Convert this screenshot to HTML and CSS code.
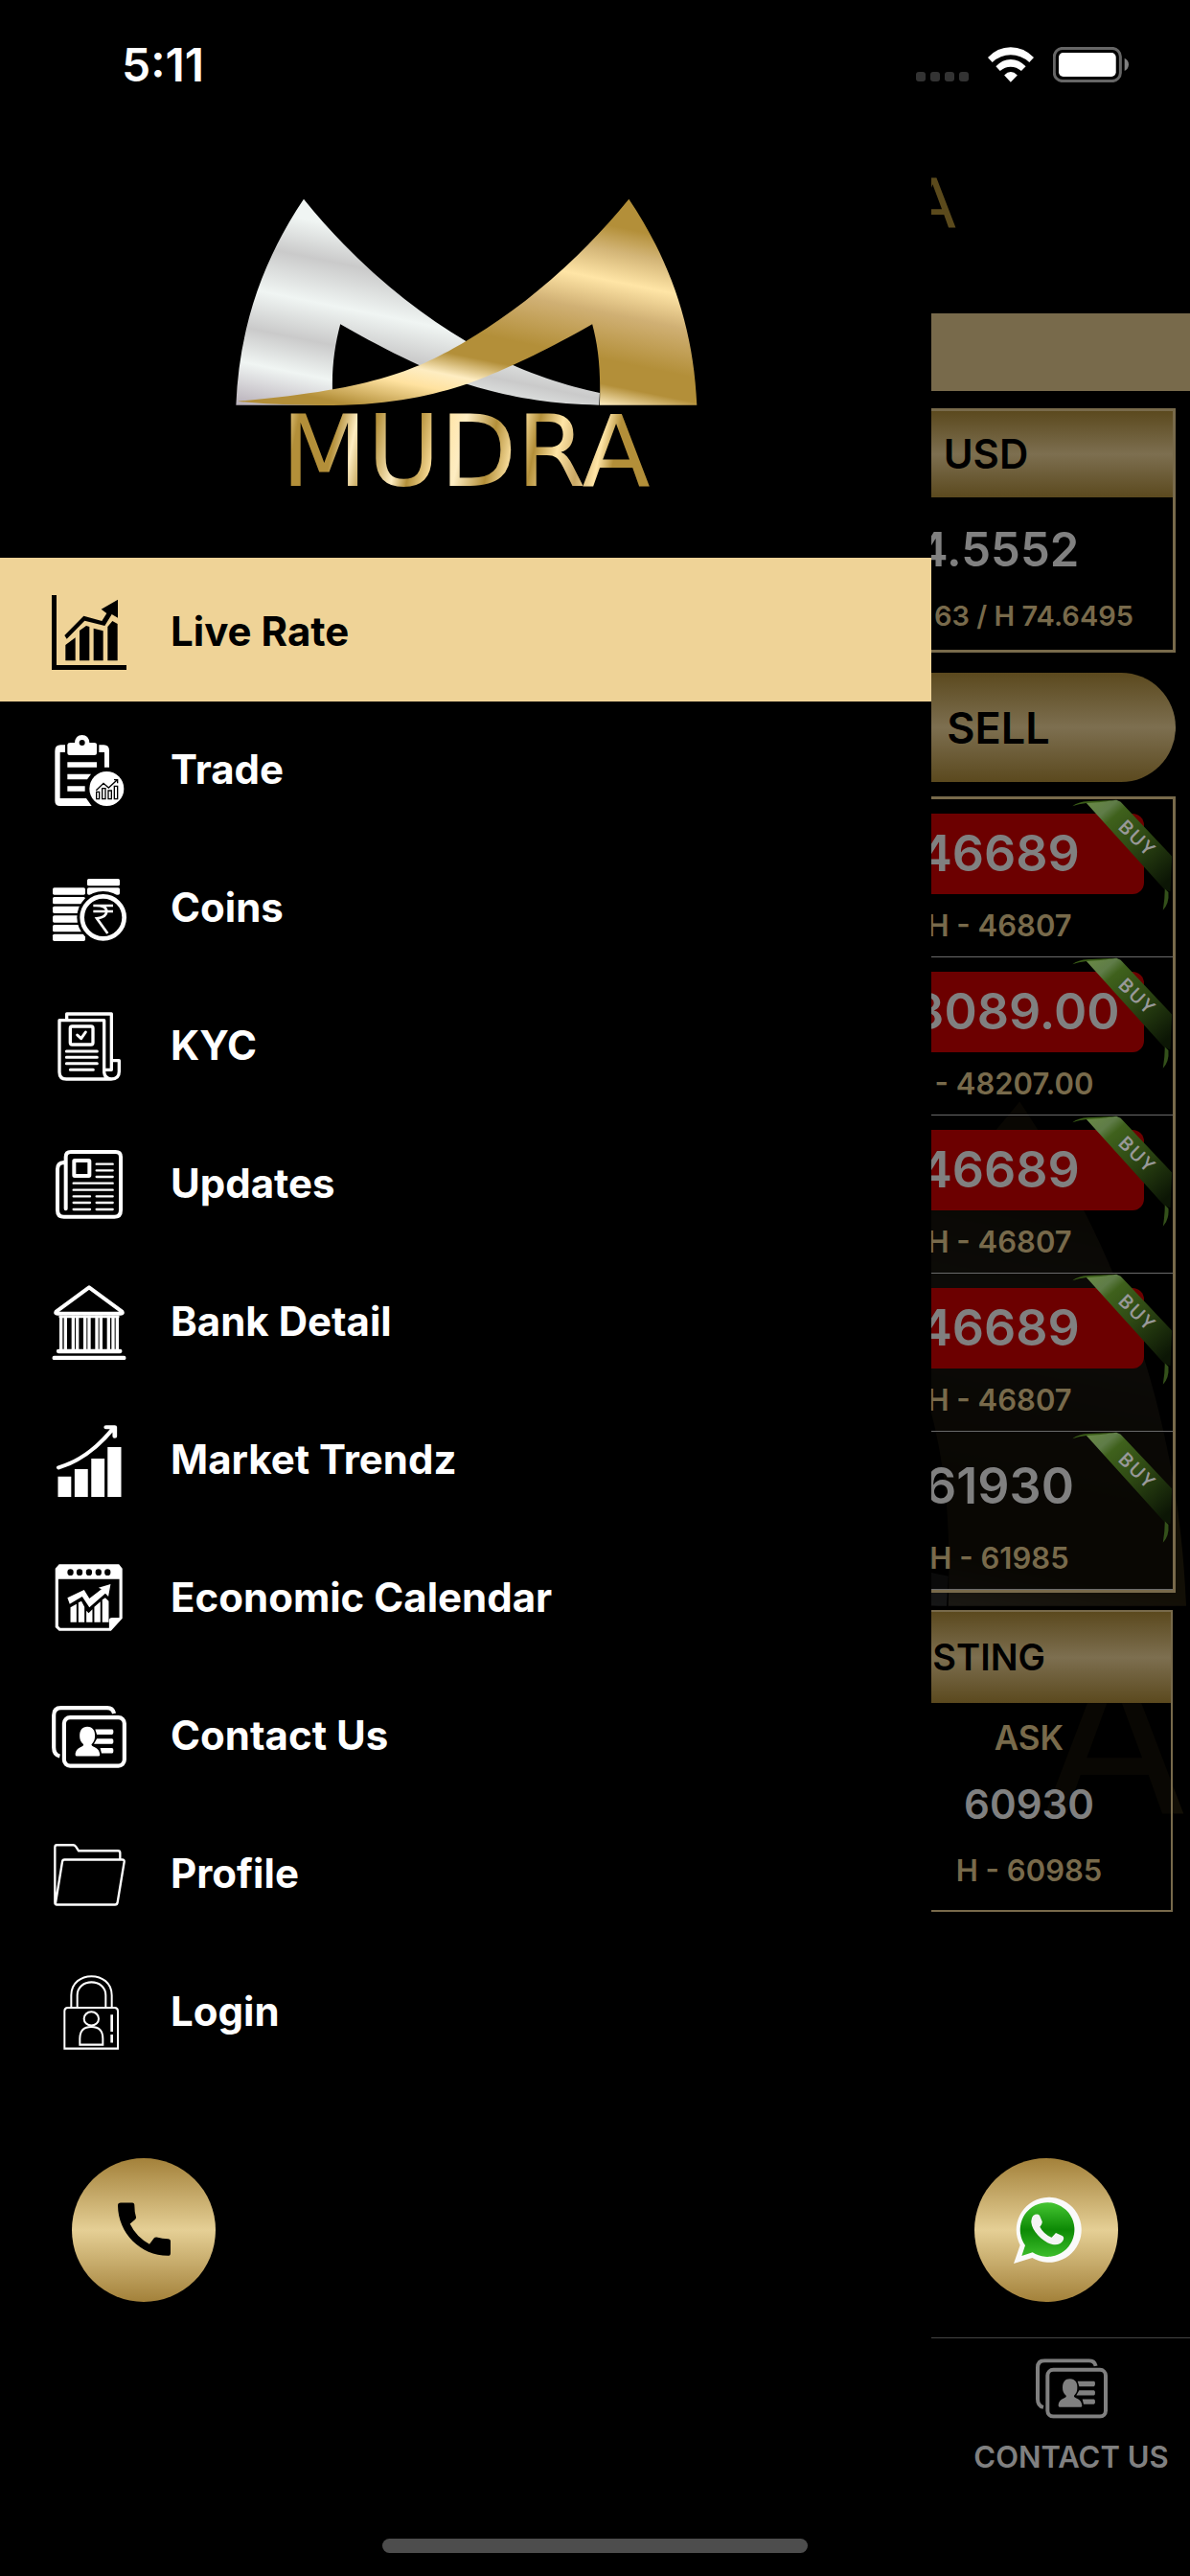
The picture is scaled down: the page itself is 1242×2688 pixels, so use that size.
FILE: index.html
```html
<!DOCTYPE html>
<html lang="en">
<head>
<meta charset="utf-8">
<meta name="viewport" content="width=device-width, initial-scale=1">
<title>Mudra</title>
<link rel="stylesheet" href="styles.css">
</head>
<body>
<svg class="defs" aria-hidden="true">
  <defs>
    <linearGradient id="gold" gradientUnits="userSpaceOnUse" x1="1288" y1="53" x2="1119" y2="881">
      <stop offset="0" stop-color="#b38f39"/><stop offset=".11" stop-color="#b38f39"/>
      <stop offset=".2" stop-color="#d3b577"/><stop offset=".31" stop-color="#ffe5a6"/>
      <stop offset=".43" stop-color="#d0b074"/><stop offset=".6" stop-color="#b38f39"/>
      <stop offset=".69" stop-color="#b38f39"/><stop offset=".77" stop-color="#feedc2"/>
      <stop offset=".83" stop-color="#ffe2a0"/><stop offset=".95" stop-color="#b38f39"/>
    </linearGradient>
    <linearGradient id="silver" gradientUnits="userSpaceOnUse" x1="284" y1="53" x2="149" y2="712">
      <stop offset="0" stop-color="#f0f5f3"/><stop offset=".09" stop-color="#f0f5f3"/>
      <stop offset=".26" stop-color="#cacaca"/><stop offset=".46" stop-color="#f0f5f3"/>
      <stop offset=".64" stop-color="#cacaca"/><stop offset=".8" stop-color="#f0f5f3"/>
      <stop offset="1" stop-color="#b8b0b9"/>
    </linearGradient>
    <linearGradient id="word" gradientUnits="userSpaceOnUse" x1="70" y1="250" x2="460" y2="330">
      <stop offset="0" stop-color="#ffe5a6"/><stop offset=".05" stop-color="#b38f39"/>
      <stop offset=".15" stop-color="#b38f39"/><stop offset=".2" stop-color="#feedc2"/>
      <stop offset=".25" stop-color="#b38f39"/><stop offset=".32" stop-color="#feedc2"/>
      <stop offset=".36" stop-color="#b38f39"/><stop offset=".42" stop-color="#ffe2a0"/>
      <stop offset=".48" stop-color="#feedc2"/><stop offset=".56" stop-color="#b38f39"/>
      <stop offset=".62" stop-color="#ffe5a6"/><stop offset=".67" stop-color="#b38f39"/>
      <stop offset=".73" stop-color="#ffe5a6"/><stop offset=".79" stop-color="#c9a765"/>
      <stop offset=".84" stop-color="#ffe5a6"/><stop offset=".88" stop-color="#b38f39"/>
      <stop offset="1" stop-color="#b38f39"/>
    </linearGradient>
    <linearGradient id="band" x1="0" y1="0" x2=".8" y2="1">
      <stop offset="0" stop-color="#6a8a44"/><stop offset=".18" stop-color="#5f7c48"/>
      <stop offset=".27" stop-color="#3f611c"/><stop offset=".55" stop-color="#2f4a14"/>
      <stop offset="1" stop-color="#0c1605"/>
    </linearGradient>
    <linearGradient id="chat" x1="0" y1="0" x2="0" y2="1">
      <stop offset="0" stop-color="#45c532"/><stop offset=".5" stop-color="#0d8a05"/><stop offset="1" stop-color="#3cbd2b"/>
    </linearGradient>
    <symbol id="mark" viewBox="0 0 530 240">
      <g transform="scale(.338 .3333)">
        <path fill="url(#silver)" d="M284 53C440 250 620 400 785 498C930 585 1080 635 1198 660L1196 698C1020 695 890 665 790 633C680 595 560 540 397 445C380 510 370 580 373 660V698H75C85 450 160 240 284 53Z"/>
        <path fill="url(#gold)" d="M1288 53C1130 250 950 400 785 498C640 585 500 650 80 686C180 697 280 699 373 699C560 697 690 665 785 633C890 595 1010 540 1175 445C1192 510 1202 580 1198 698H1498C1488 450 1412 240 1288 53Z"/>
      </g>
    </symbol>
    <symbol id="ribbon" viewBox="479 40 313 350">
      <path fill="#3a5c18" d="M479 62Q495 48 530 46L617 42L560 52L523 52Q498 54 479 62Z"/>
      <path fill="url(#band)" d="M523 52Q570 50 617 42L630 48L790 218L785 328L767 322Z"/>
      <path fill="#33501a" d="M768 320L779 330Q782 365 762 386Q768 350 768 320Z"/>
    </symbol>
    <symbol id="cards" viewBox="363 724 225 188">
      <g fill="none" stroke="currentColor" stroke-width="12">
        <path d="M387 876Q369 872 369 850V752Q369 730 391 730H530Q547 730 551 747"/>
        <rect x="400" y="759" width="182" height="146" rx="18"/>
      </g>
      <path fill="currentColor" d="M470 787C487 787 494 800 493 815C493 830 487 835 483 840C480 850 507 846 508 872Q508 876 503 876H439Q434 876 434 872C435 846 462 850 458 840C450 832 447 826 447 815C447 797 455 787 470 787Z"/>
      <path fill="currentColor" d="M494 795H545Q549 795 549 802T545 811H499ZM499 823H545Q549 823 549 831T545 839H490ZM509 851H545Q549 851 549 859T545 867H513Z"/>
    </symbol>
  </defs>
</svg>

<div class="app">
  <aside class="drawer">
    <header class="brand">
      <svg class="logo" viewBox="0 0 530 340" role="img" aria-label="Mudra">
        <use href="#mark" width="530" height="240"/>
        <text class="wordmark" x="265" y="317" text-anchor="middle" fill="url(#word)">MUDRA</text>
      </svg>
    </header>
    <nav>
      <ul class="menu">
        <li><a class="item active" href="#live-rate">
          <svg class="icon" viewBox="162 153 234 234" fill="currentColor"><path d="M162 153H177V372H396V387H162ZM205 309L236 286V358H205ZM249 264L270 249L280 252V358H249ZM293 257L323 265V358H293ZM337 252L352 234L368 243V358H337ZM202 279L262 218L319 234L334 210L317 197L369 167V224L350 213L328 249L265 233L209 290Z"/></svg>
          <span>Live Rate</span></a></li>
        <li><a class="item" href="#trade">
          <svg class="icon" viewBox="162 585 234 234" fill="currentColor"><path fill-rule="evenodd" d="M211 621Q212 615 220 615H234Q236 591 257 591T280 615H295Q303 615 303 622V648Q303 654 296 654H218Q211 654 211 648ZM257 606A9 9 0 1 0 257 624A9 9 0 1 0 257 606Z"/><path d="M204 622V645H188V789H270L287 813H188Q172 813 172 797V641Q172 622 190 622ZM310 622H325Q342 622 342 640V692H327V645H310ZM211 676H303V692H211ZM211 713H285L273 730H211ZM211 751H266V767H211Z"/><circle cx="334" cy="759" r="54"/><path fill="none" stroke="#000" stroke-width="4" d="M301 764L324 742L340 756L367 731M357 731H368V742M302 769H311V791H302ZM320 758H330V791H320ZM339 765H349V791H339ZM358 751H368V791H358Z"/></svg>
          <span>Trade</span></a></li>
        <li><a class="item" href="#coins">
          <svg class="icon" viewBox="162 1017 234 234" fill="currentColor"><rect x="273" y="1041" width="102" height="22" rx="5"/><rect x="273" y="1069" width="102" height="22" rx="5"/><rect x="165" y="1069" width="102" height="22" rx="5"/><rect x="165" y="1098" width="102" height="22" rx="5"/><rect x="165" y="1127" width="102" height="22" rx="5"/><rect x="165" y="1156" width="102" height="22" rx="5"/><rect x="165" y="1185" width="102" height="22" rx="5"/><rect x="165" y="1214" width="102" height="22" rx="5"/><circle cx="323" cy="1162" r="82" fill="#000"/><circle cx="323" cy="1162" r="66" fill="none" stroke="currentColor" stroke-width="14"/><path fill="none" stroke="currentColor" stroke-width="8" d="M292 1125H354M292 1143H354M300 1125Q334 1125 334 1143T303 1165L337 1212"/></svg>
          <span>Coins</span></a></li>
        <li><a class="item" href="#kyc">
          <svg class="icon" viewBox="162 159 234 234" fill="none" stroke="currentColor" stroke-width="10" stroke-linejoin="round" stroke-linecap="round"><path d="M209 190V174H349V349H330M326 357V194H186V356Q186 378 208 378H348Q373 378 373 355V320H353M326 357Q328 376 348 378M212 378H340"/><rect x="220" y="213" width="71" height="57" rx="6"/><path stroke-width="9" d="M242 240L254 251L268 231M208 291H304M208 310H304M208 329H304M220 349H292"/></svg>
          <span>KYC</span></a></li>
        <li><a class="item" href="#updates">
          <svg class="icon" viewBox="162 591 234 234" fill="none" stroke="currentColor" stroke-width="12" stroke-linecap="round"><path d="M206 784V622Q206 606 222 606H362Q378 606 378 622V788Q378 809 358 809H200Q180 809 180 788V660Q180 640 200 639"/><rect x="232" y="633" width="48" height="48" rx="2"/><path stroke-width="7" d="M302 644H353M302 664H353M302 684H353M230 704H353M230 725H353M230 745H282M302 745H353M230 765H282M302 765H353M230 786H282M302 786H353"/></svg>
          <span>Updates</span></a></li>
        <li><a class="item" href="#bank">
          <svg class="icon" viewBox="162 1023 234 234" fill="none" stroke="currentColor" stroke-linejoin="round" stroke-linecap="round"><path stroke-width="12" d="M279 1030L176 1106Q172 1112 180 1112H378Q386 1112 382 1106Z"/><path stroke-width="13" d="M183 1230H376M170 1251H388"/><path stroke-width="10" stroke-linecap="butt" d="M191 1118V1226M205 1118V1226M229 1118V1226M242 1118V1226M266 1118V1226M279 1118V1226M303 1118V1226M316 1118V1226M340 1118V1226M354 1118V1226M367 1118V1226"/><path stroke-width="8" d="M188 1122H370"/></svg>
          <span>Bank Detail</span></a></li>
        <li><a class="item" href="#trendz">
          <svg class="icon" viewBox="136.6 165 197.3 234" preserveAspectRatio="none" fill="currentColor"><path d="M153 332H188V396H153ZM197 309H232V396H197ZM241 276H276V396H241ZM284 240H320V396H284Z"/><path fill="none" stroke="currentColor" stroke-width="12" stroke-linecap="round" stroke-linejoin="round" d="M155 304Q235 276 300 180M280 178H303V206"/></svg>
          <span>Market Trendz</span></a></li>
        <li><a class="item" href="#calendar">
          <svg class="icon" viewBox="136.6 597 197.3 234" preserveAspectRatio="none" fill="currentColor"><path fill-rule="evenodd" d="M156 607H314L323 620V776L293 815H156L146 804V620ZM154 653V800L159 806H288V780Q289 774 296 774H315V653Z"/><g fill="#000"><ellipse cx="186" cy="632" rx="8" ry="10"/><ellipse cx="210" cy="632" rx="8" ry="10"/><ellipse cx="235" cy="632" rx="8" ry="10"/><ellipse cx="260" cy="632" rx="8" ry="10"/><ellipse cx="284" cy="632" rx="8" ry="10"/></g><path d="M178 712L222 687L236 714L268 685L260 680L292 669L286 708L278 698L236 742L217 708L184 731ZM186 742L202 731V788H186ZM207 727L215 722L223 740V788H207ZM228 752L234 760L244 748V788H228ZM249 740L265 724V788H249ZM270 718L278 712L287 722V788H270Z"/></svg>
          <span>Economic Calendar</span></a></li>
        <li><a class="item" href="#contact">
          <svg class="icon" viewBox="0 0 78 78"><use href="#cards" y="7" width="78" height="65"/></svg>
          <span>Contact Us</span></a></li>
        <li><a class="item" href="#profile">
          <svg class="icon" viewBox="162 160 234 218" preserveAspectRatio="none" fill="none" stroke="currentColor" stroke-width="7" stroke-linejoin="round"><path d="M376 224V206Q376 200 369 200H246L237 187Q234 183 229 183H178Q172 183 172 189V350Q172 357 178 357H360Q367 357 368 350L389 232Q390 226 383 226H202Q196 226 195 232L174 352"/></svg>
          <span>Profile</span></a></li>
        <li><a class="item" href="#login">
          <svg class="icon" viewBox="162 563 234 218" preserveAspectRatio="none" fill="none" stroke="currentColor" stroke-width="6"><path d="M202 777V668Q202 658 212 658H359Q369 658 369 668V777ZM223 658V622C223 548 350 548 350 622V658M242 658V622C242 571 331 571 331 622V658"/><ellipse cx="286" cy="690" rx="23" ry="20"/><path d="M250 766V748Q250 714 286 714T322 748V766Z"/><path stroke-width="8" d="M350 678V728M350 736V760"/></svg>
          <span>Login</span></a></li>
      </ul>
    </nav>
  </aside>

  <main class="peek">
    <svg class="watermark" viewBox="0 0 270 778" aria-hidden="true">
      <use href="#mark" x="-974" y="-16" width="1298" height="588"/>
      <text x="265" y="770" text-anchor="end">A</text>
    </svg>
    <header class="peek-head"><div class="peek-brand">A</div></header>
    <div class="ticker"></div>

    <section class="card">
      <h2 class="card-title under-wide">USD</h2>
      <div class="card-body">
        <p class="value under-wide">74.5552</p>
        <p class="range">63 / H 74.6495</p>
      </div>
    </section>

    <button class="sell" type="button"><span>SELL</span></button>

    <section class="rates">
      <div class="rate"><div class="price down">46689</div><div class="high">H - 46807</div>
        <svg class="buy" viewBox="479 40 313 350"><use href="#ribbon" x="479" y="40" width="313" height="350"/><text transform="translate(682 160) rotate(44)">BUY</text></svg></div>
      <div class="rate"><div class="price down">48089.00</div><div class="high">H - 48207.00</div>
        <svg class="buy" viewBox="479 40 313 350"><use href="#ribbon" x="479" y="40" width="313" height="350"/><text transform="translate(682 160) rotate(44)">BUY</text></svg></div>
      <div class="rate"><div class="price down">46689</div><div class="high">H - 46807</div>
        <svg class="buy" viewBox="479 40 313 350"><use href="#ribbon" x="479" y="40" width="313" height="350"/><text transform="translate(682 160) rotate(44)">BUY</text></svg></div>
      <div class="rate"><div class="price down">46689</div><div class="high">H - 46807</div>
        <svg class="buy" viewBox="479 40 313 350"><use href="#ribbon" x="479" y="40" width="313" height="350"/><text transform="translate(682 160) rotate(44)">BUY</text></svg></div>
      <div class="rate"><div class="price">61930</div><div class="high">H - 61985</div>
        <svg class="buy" viewBox="479 40 313 350"><use href="#ribbon" x="479" y="40" width="313" height="350"/><text transform="translate(682 160) rotate(44)">BUY</text></svg></div>
    </section>

    <section class="costing">
      <h2 class="costing-title">STING</h2>
      <div class="costing-body">
        <p class="ask">ASK</p>
        <p class="ask-value">60930</p>
        <p class="high-line">H - 60985</p>
      </div>
    </section>

    <nav class="tabs">
      <a class="tab" href="#contact"><svg class="tab-icon" viewBox="363 724 225 188"><use href="#cards" x="363" y="724" width="225" height="188"/></svg><span>CONTACT US</span></a>
    </nav>
  </main>
</div>

<div class="status">
  <time class="clock">5:11</time>
  <div class="indicators">
    <svg class="dots" viewBox="0 0 55 10" fill="#333"><rect width="10" height="10" rx="3"/><rect x="15" width="10" height="10" rx="3"/><rect x="30" width="10" height="10" rx="3"/><rect x="45" width="10" height="10" rx="3"/></svg>
    <svg class="wifi" viewBox="215 147 143 109" fill="#fff"><path d="M215 179Q245 147 286 147T358 179L344 194Q318 171 286 171T229 194ZM240 207Q260 185 286 185T333 207L319 221Q304 208 286 208T253 221ZM266 234Q286 214 307 234L286 256Z"/></svg>
    <svg class="battery" viewBox="417 147 238 111"><rect x="421" y="151" width="208" height="103" rx="26" fill="none" stroke="#666" stroke-width="9"/><rect x="435" y="165" width="180" height="75" rx="14" fill="#fff"/><path fill="#808080" d="M642 182Q655 188 655 202T642 222Z"/></svg>
  </div>
</div>

<div class="fabs">
  <button class="fab" type="button" aria-label="Call">
    <svg viewBox="225 1100 450 420" preserveAspectRatio="none"><path d="M378 1230H414Q421 1230 421 1238Q421 1258 426 1272Q427 1276 423 1279L407 1292Q427 1331 468 1351L482 1334Q485 1330 491 1331Q508 1336 526 1336Q534 1336 534 1343V1377Q534 1385 526 1385C440 1385 370 1320 369 1238Q369 1230 378 1230Z"/></svg>
  </button>
  <button class="fab" type="button" aria-label="WhatsApp">
    <svg viewBox="171 99 450 450"><path fill="#fafafa" d="M294 429L314 371A102 102 0 1 1 352 411Z"/><path fill="url(#chat)" d="M319 405L330 372A85 85 0 1 1 353 394Z"/><path fill="#f4f4f4" d="M355 279Q367 271 375 278L383 297Q385 303 376 314Q388 337 413 347L426 333L446 342Q454 347 448 358Q438 373 415 369C385 362 352 328 349 300Q348 286 355 279Z"/></svg>
  </button>
</div>
<div class="home-bar"></div>
</body>
</html>
```
FILE: styles.css
```css
* { box-sizing: border-box; }
body {
  margin: 0;
  background: #000;
  color: #fff;
  font-family: Inter, "Liberation Sans", sans-serif;
  font-weight: 600;
}
h2, p, ul { margin: 0; padding: 0; font-weight: inherit; }
button { border: 0; padding: 0; font: inherit; }
a { color: inherit; text-decoration: none; }
svg { display: block; }
.defs { position: absolute; width: 0; height: 0; }

.app { display: flex; min-height: 100vh; }

/* Drawer */
.drawer { flex: 1; min-width: 0; background: #000; }
.brand { display: flex; justify-content: center; padding: 190px 0 52px; }
.logo { width: 530px; height: 340px; overflow: visible; }
.wordmark { font: 400 104px "DejaVu Sans", sans-serif; }
.menu { list-style: none; }
.item {
  display: flex;
  align-items: center;
  gap: 46px;
  height: 144px;
  padding-left: 54px;
  font-size: 42px;
  font-weight: 700;
}
.item span { padding-bottom: 3px; }
.item.active { height: 150px; padding-top: 6px; background: #efd397; color: #000; }
.icon { flex: none; width: 78px; height: 78px; }

/* Dimmed screen beside the drawer */
.peek {
  position: relative;
  display: flex;
  flex-direction: column;
  width: 270px;
  overflow: hidden;
  color: #808080;
  white-space: nowrap;
}
.peek > * { position: relative; }
.peek > .watermark { position: absolute; top: 1122px; left: 0; width: 270px; height: 778px; opacity: .1; }
.watermark text { font: 400 216px "DejaVu Sans", sans-serif; fill: #b38f39; }
.peek-head { height: 327px; padding-top: 170px; }
.peek-brand {
  display: flex;
  justify-content: flex-end;
  width: 26px;
  overflow: hidden;
  font: 400 72px/84px "DejaVu Sans", sans-serif;
  color: #5b4a1c;
}
.ticker { height: 81px; background: #786a4b; }

.card {
  margin: 18px 15px 0 0;
  border: solid #786a4b;
  border-width: 3px 3px 3px 0;
  overflow: hidden;
}
.card-title, .costing-title, .sell { background: linear-gradient(#5b491e, #7d6f50 50%, #5b491e); color: #000; }
.under-wide { margin-left: -138px; text-align: center; }
.card-title { font-size: 42px; line-height: 90px; }
.card-body { padding: 27px 0 17px; }
.value { font-size: 49px; line-height: 56px; }
.range { margin-top: 23px; padding-right: 41px; font-size: 29px; line-height: 36px; color: #786a4b; display: flex; justify-content: flex-end; }

.sell {
  height: 114px;
  margin: 21px 15px 0 -115px;
  border-radius: 57px;
  font-size: 45px;
  text-align: center;
}

.rates {
  margin: 15px 15px 0 0;
  border: solid #786a4b;
  border-width: 3px 3px 3px 0;
  background: rgba(0, 0, 0, .5);
}
.rate {
  position: relative;
  height: 165px;
  padding: 15px 30px 0 0;
  border-bottom: 1px solid #6a6a6a;
}
.price { margin-left: -80px; border-radius: 12px; font-size: 52px; line-height: 84px; text-align: center; }
.down { background: #6c0000; }
.high { margin: 15px 0 0 -80px; font-size: 31px; line-height: 36px; text-align: center; color: #786a4b; }
.buy { position: absolute; top: 0; right: 0; width: 105px; height: 117px; }
.buy text {
  font: 600 60px "Open Sans", sans-serif;
  letter-spacing: .08em;
  text-anchor: middle;
  dominant-baseline: central;
  fill: #999;
}

.costing {
  margin: 18px 18px 0 0;
  border: solid #786a4b;
  border-width: 2px 2px 2px 0;
  background: rgba(0, 0, 0, .5);
}
.costing-title { display: flex; justify-content: flex-end; padding-right: 131px; font-size: 38px; line-height: 95px; }
.costing-body { padding: 2px 46px 7px 0; text-align: center; line-height: 69px; }
.ask { font-size: 35px; color: #786a4b; }
.ask-value { font-size: 42px; }
.high-line { font-size: 31px; color: #786a4b; }

.tabs { height: 249px; margin-top: auto; border-top: 1px solid #444; padding: 21px 0 0 22px; }
.tab { display: flex; flex-direction: column; align-items: center; gap: 22px; font-size: 31px; line-height: 36px; }
.tab-icon { width: 75px; height: 63px; }

/* Overlays */
.status {
  position: absolute;
  top: 0;
  left: 0;
  right: 0;
  display: flex;
  justify-content: space-between;
  align-items: center;
  height: 135px;
  padding: 0 64px 0 127px;
}
.clock { font-size: 48px; line-height: 56px; }
.indicators { display: flex; align-items: center; gap: 20px; }
.dots { width: 55px; height: 10px; margin-top: 24px; }
.wifi { width: 48px; height: 37px; }
.battery { width: 79px; height: 37px; }
.fabs {
  position: fixed;
  left: 75px;
  right: 75px;
  bottom: 286px;
  display: flex;
  justify-content: space-between;
}
.fab {
  width: 150px;
  height: 150px;
  border-radius: 50%;
  background: linear-gradient(#a3813a, #e5cf95 50%, #a3813a);
}
.fab svg { width: 150px; height: 150px; }
.home-bar {
  position: fixed;
  bottom: 24px;
  left: 50%;
  width: 444px;
  height: 15px;
  margin-left: -222px;
  border-radius: 8px;
  background: #4d4d4d;
}
```
